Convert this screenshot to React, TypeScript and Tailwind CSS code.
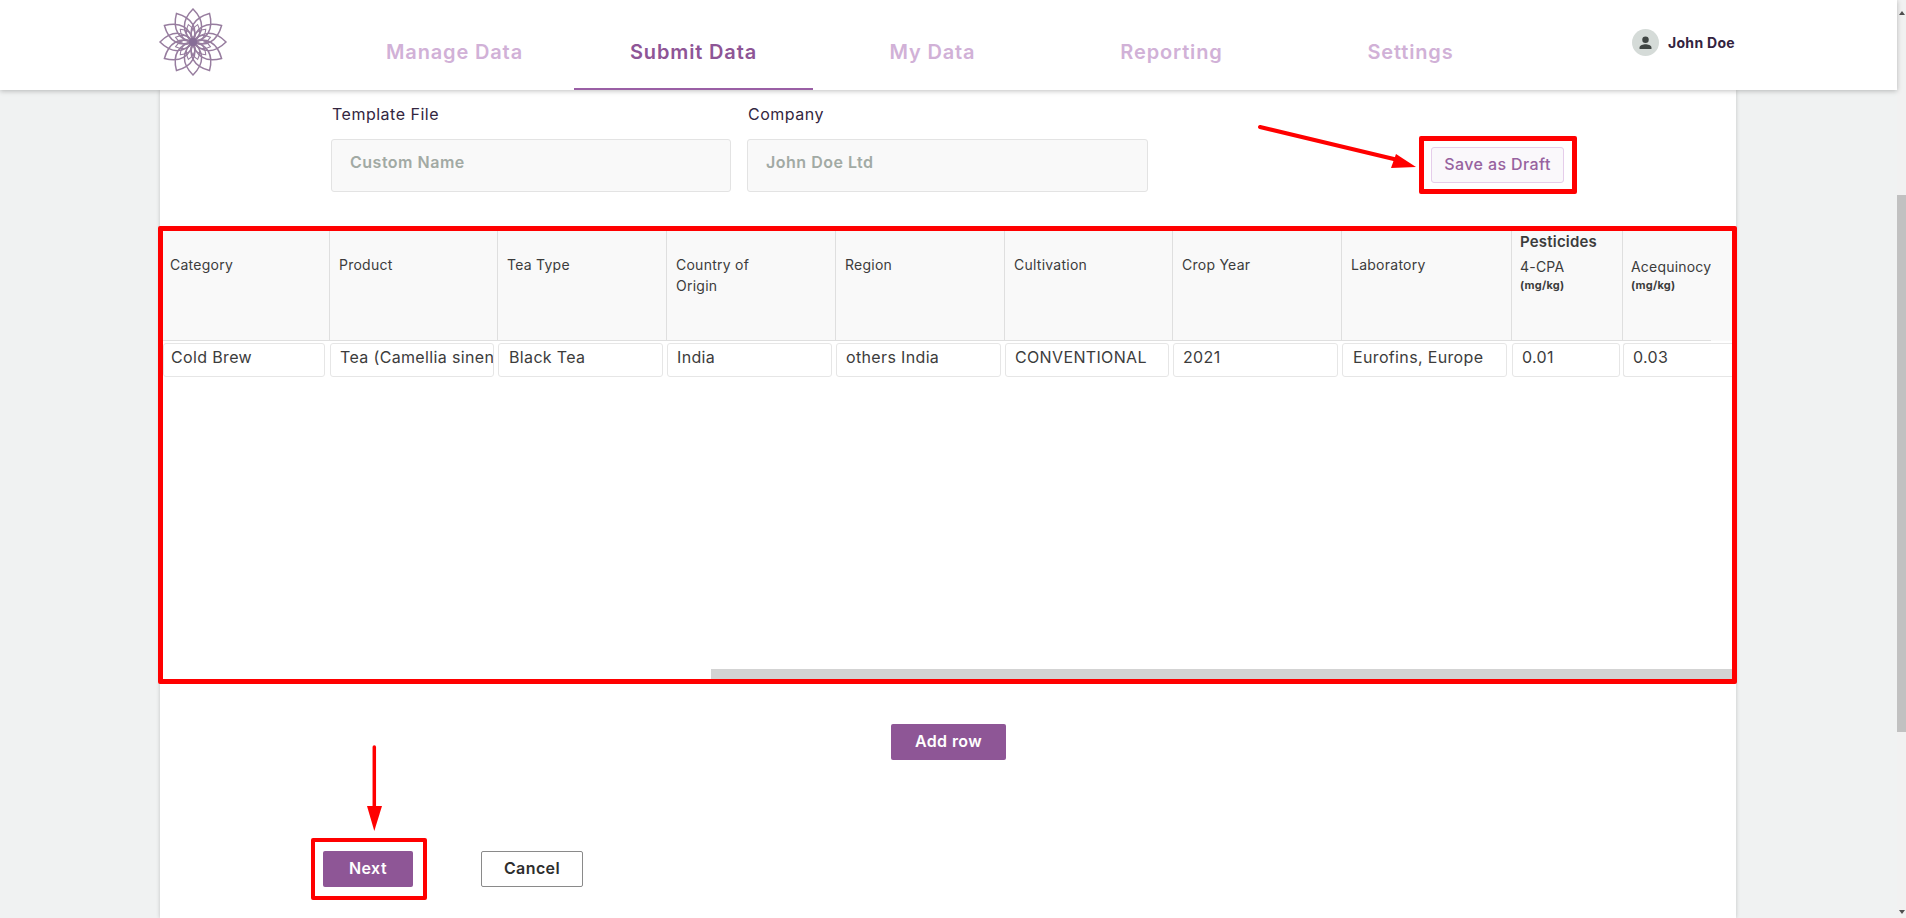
const columns = [
  { label: 'Category', value: 'Cold Brew', head: 'w-[167px] pl-[7px]', cell: 'w-[166px]', input: 'w-[162px] ml-0', pad: 'pl-[7px]' },
  { label: 'Product', value: 'Tea (Camellia sinensis)', head: 'w-[168px] pl-[9px]', cell: 'w-[168px]', input: 'w-[164px] ml-[1px]', pad: 'pl-[9px]' },
  { label: 'Tea Type', value: 'Black Tea', head: 'w-[169px] pl-[9px]', cell: 'w-[169px]', input: 'w-[165px] ml-[1px]', pad: 'pl-[10px]' },
  { label: 'Country of Origin', value: 'India', head: 'w-[169px] pl-[9px]', cell: 'w-[169px]', input: 'w-[165px] ml-[1px]', pad: 'pl-[9px]', wrap: true },
  { label: 'Region', value: 'others India', head: 'w-[169px] pl-[9px]', cell: 'w-[169px]', input: 'w-[165px] ml-[1px]', pad: 'pl-[9px]' },
  { label: 'Cultivation', value: 'CONVENTIONAL', head: 'w-[168px] pl-[9px]', cell: 'w-[168px]', input: 'w-[164px] ml-[1px]', pad: 'pl-[9px]' },
  { label: 'Crop Year', value: '2021', head: 'w-[169px] pl-[9px]', cell: 'w-[169px]', input: 'w-[165px] ml-[1px]', pad: 'pl-[9px]' },
  { label: 'Laboratory', value: 'Eurofins, Europe', head: 'w-[170px] pl-[9px]', cell: 'w-[170px]', input: 'w-[165px] ml-[1px]', pad: 'pl-[10px]' },
];

const navItems = ['Manage Data', 'Submit Data', 'My Data', 'Reporting', 'Settings'];

const Logo = () => {
  const angles = Array.from({ length: 12 }, (_, i) => i * 30);
  return (
    <svg width="70" height="70" viewBox="-35 -35 70 70" fill="none" className="opacity-75">
      {angles.map((a) => (
        <path
          key={a}
          d="M0 0C-11 -9 -12 -21 0 -33C12 -21 11 -9 0 0Z"
          transform={`rotate(${a})`}
          stroke="#75527f"
          strokeWidth="1.5"
        />
      ))}
      {angles.map((a) => (
        <path
          key={`i${a}`}
          d="M0 0C-5 -5 -6 -11 0 -18C6 -11 5 -5 0 0Z"
          transform={`rotate(${a + 15})`}
          stroke="#75527f"
          strokeWidth="1.1"
        />
      ))}
      <circle r="4" fill="#5f3d75" />
    </svg>
  );
};

const Header = () => (
  <header className="relative z-10 flex h-[90px] shrink-0 items-stretch bg-white shadow-[0_1px_5px_rgba(0,0,0,0.25)]">
    <div className="ml-[158px] mt-[7px] h-[70px] w-[70px]">
      <Logo />
    </div>
    <nav className="ml-[107px] flex">
      {navItems.map((item) => (
        <div
          key={item}
          className={
            item === 'Submit Data'
              ? 'flex w-[239px] items-center justify-center border-b-2 border-[#9a5fa5] pt-[16px] text-[20px] font-semibold tracking-[0.85px] text-[#8e5596]'
              : 'flex w-[239px] items-center justify-center border-b-2 border-transparent pt-[16px] text-[20px] font-semibold tracking-[0.85px] text-[#d1b1d7]'
          }
        >
          {item}
        </div>
      ))}
    </nav>
    <div className="ml-[102px] mt-[29px] flex h-[27px] items-center gap-[9px]">
      <div className="flex h-[27px] w-[27px] items-center justify-center rounded-full bg-[#d5dbd8]">
        <svg width="13" height="13" viewBox="0 0 24 24" fill="#3f4543">
          <circle cx="12" cy="7" r="6" />
          <path d="M1 24v-3c0-4 7-6 11-6s11 2 11 6v3z" />
        </svg>
      </div>
      <span className="text-[14px] font-bold tracking-[0.3px] text-[#33233f]">John Doe</span>
    </div>
  </header>
);

const FormField = ({ label, value, width }: { label: string; value: string; width: string }) => (
  <div className={width}>
    <label className="mb-[15px] ml-[1px] block text-[16px] leading-[20px] tracking-[0.5px] text-[#33263f]">{label}</label>
    <div className="flex h-[53px] items-center rounded-[3px] border border-[#e3e3e3] bg-[#f9f9f9] pb-[7px] pl-[18px] text-[16px] font-semibold tracking-[0.5px] text-[#a2aaa4]">
      {value}
    </div>
  </div>
);

const PesticideHead = ({ name, width, heading }: { name: string; width: string; heading?: boolean }) => (
  <div className={`${width} h-full shrink-0 overflow-hidden whitespace-nowrap border-r border-[#dfdfdf] pl-[8px] pt-[1px] text-[14px] tracking-[0.2px] text-[#3c3c3c]`}>
    <div className="h-[20px] text-[15px] font-semibold leading-[20px]">{heading ? 'Pesticides' : ''}</div>
    <div className="mt-[5px] leading-[20px]">{name}</div>
    <div className="text-[11px] font-bold leading-[16px]">(mg/kg)</div>
  </div>
);

const DataTable = () => (
  <div className="relative h-[448px] w-[1569px] overflow-hidden">
    <div className="h-[110px] w-[1569px] bg-[#f9f9f9]">
      <div className="flex h-[110px] w-[1548px] overflow-hidden border-b border-[#dfdfdf]">
        {columns.map((col) => (
          <div
            key={col.label}
            className={`${col.head} shrink-0 border-r border-[#dfdfdf] pt-[23px] text-[14px] leading-[21px] tracking-[0.25px] text-[#3c3c3c]`}
          >
            <div className={col.wrap ? 'w-[90px]' : ''}>{col.label}</div>
          </div>
        ))}
        <PesticideHead name="4-CPA" width="w-[111px]" heading />
        <PesticideHead name="Acequinocyl" width="w-[88px] border-r-0" />
      </div>
    </div>
    <div className="mt-[2px] flex w-[1569px] overflow-hidden">
      {columns.map((col) => (
        <div key={col.label} className={`${col.cell} shrink-0`}>
          <input
            readOnly
            value={col.value}
            className={`${col.input} ${col.pad} h-[34px] rounded-[3px] border border-[#e6e6e6] bg-white pb-[7px] text-[16px] tracking-[0.35px] text-[#3c3c3c] outline-none`}
          />
        </div>
      ))}
      <div className="w-[112px] shrink-0">
        <input readOnly value="0.01" className="ml-[1px] h-[34px] w-[108px] rounded-[3px] border border-[#e6e6e6] bg-white pb-[7px] pl-[9px] text-[16px] tracking-[0.35px] text-[#3c3c3c] outline-none" />
      </div>
      <div className="w-[109px] shrink-0">
        <input readOnly value="0.03" className="h-[34px] w-[109px] rounded-l-[3px] border border-r-0 border-[#e6e6e6] bg-white pb-[7px] pl-[9px] text-[16px] tracking-[0.35px] text-[#3c3c3c] outline-none" />
      </div>
    </div>
    <div className="absolute bottom-0 left-[548px] h-[10px] w-[1021px] bg-[#d3d3d3]" />
  </div>
);

// annotations drawn over the page
const Annotations = () => (
  <>
    <div className="absolute left-[158px] top-[226px] h-[458px] w-[1579px] rounded-[2px] border-[5px] border-[#ff0000]" />
    <div className="absolute left-[1419px] top-[136px] h-[58px] w-[158px] rounded-[2px] border-[5px] border-[#ff0000]" />
    <div className="absolute left-[311px] top-[838px] h-[62px] w-[116px] rounded-[2px] border-[4px] border-[#ff0000]" />
    <svg className="absolute left-0 top-0" width="1906" height="918" fill="none">
      <path d="M1260 127L1398 160" stroke="#ff0000" strokeWidth="4" strokeLinecap="round" />
      <path d="M1416 167L1391 168L1396 154Z" fill="#ff0000" />
      <path d="M374.3 747V808" stroke="#ff0000" strokeWidth="3.5" strokeLinecap="round" />
      <path d="M367 806H382L374.3 831Z" fill="#ff0000" />
    </svg>
  </>
);

const Scrollbar = () => (
  <div className="relative w-[9px] shrink-0 bg-[#f1f1f1]">
    <div className="absolute left-0 top-[195px] h-[537px] w-[9px] bg-[#c1c1c1]" />
    <div className="absolute left-[2px] top-[11px] h-0 w-0 border-x-[3px] border-b-[4px] border-x-transparent border-b-[#505050]" />
    <div className="absolute bottom-[4px] left-[2px] h-0 w-0 border-x-[3px] border-t-[4px] border-x-transparent border-t-[#505050]" />
  </div>
);

const App = () => {
  return (
    <div className="relative flex h-[918px] w-[1906px] overflow-hidden bg-[#f0f2f2] font-['Inter',sans-serif]">
      <div className="flex min-w-0 flex-1 flex-col">
        <Header />
        <main className="ml-[160px] h-[828px] w-[1576px] bg-white shadow-[0_0_4px_rgba(0,0,0,0.2)]">
          <div className="flex pl-[171px] pt-[14px]">
            <FormField label="Template File" value="Custom Name" width="w-[400px]" />
            <FormField label="Company" value="John Doe Ltd" width="ml-[16px] w-[401px]" />
            <button className="ml-[283px] mt-[43px] h-[36px] w-[133px] rounded-[3px] border border-[#e5cdea] bg-[#faf8fb] pb-[2px] text-[16px] font-medium tracking-[0.4px] text-[#97629f]">
              Save as Draft
            </button>
          </div>
          <div className="ml-[3px] mt-[39px]">
            <DataTable />
          </div>
          <div className="mt-[45px] flex justify-center pl-[1px]">
            <button className="h-[36px] w-[115px] rounded-[2px] bg-[#8e5696] pb-[2px] text-[16px] font-semibold tracking-[0.4px] text-white">Add row</button>
          </div>
          <div className="mt-[91px] flex pl-[163px]">
            <button className="h-[36px] w-[90px] rounded-[2px] bg-[#8e5696] pb-[2px] text-[16px] font-semibold tracking-[0.4px] text-white">Next</button>
            <button className="ml-[68px] h-[36px] w-[102px] rounded-[2px] border border-[#8a8a8a] bg-white pb-[2px] text-[16px] font-semibold tracking-[0.4px] text-[#2e2e2e]">Cancel</button>
          </div>
        </main>
      </div>
      <Scrollbar />
      <Annotations />
    </div>
  );
};

export default App;
